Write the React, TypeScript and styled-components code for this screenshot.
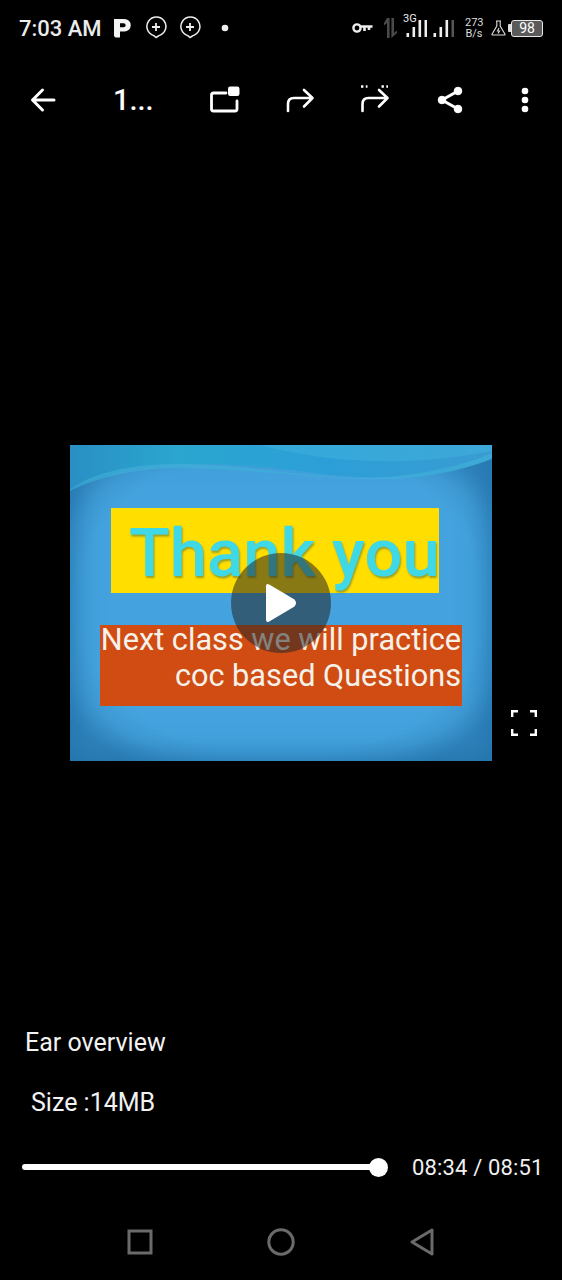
import styled, { createGlobalStyle } from 'styled-components';

const GlobalStyle = createGlobalStyle`
  html, body {
    margin: 0;
    padding: 0;
    background: #000;
  }
  * {
    box-sizing: border-box;
  }
`;

const Page = styled.div`
  width: 562px;
  height: 1280px;
  display: flex;
  flex-direction: column;
  background: #000;
  color: #fff;
  font-family: Roboto, 'Liberation Sans', sans-serif;
  overflow: hidden;
`;

const StatusBar = styled.div`
  height: 56px;
  display: flex;
  align-items: center;
  justify-content: space-between;
  padding: 0 19px;
`;

const StatusGroup = styled.div`
  display: flex;
  align-items: center;
`;

const Clock = styled.span`
  width: 95px;
  font-size: 22px;
  font-weight: 500;
  opacity: 0.92;
`;

const Glyph = styled.svg<{ $left?: number }>`
  display: block;
  flex: none;
  margin-left: ${({ $left }) => $left ?? 0}px;
`;

const Signal = styled.div`
  position: relative;
  width: 51px;
  height: 18px;
  margin-left: 5px;
  display: flex;
  justify-content: space-between;
  padding-left: 3px;
`;

const NetworkLabel = styled.span`
  position: absolute;
  left: 0;
  top: -6px;
  font-size: 11px;
  line-height: 11px;
  color: #eee;
`;

const Speed = styled.div`
  width: 18px;
  margin-left: 11px;
  font-size: 11px;
  line-height: 11px;
  text-align: center;
  color: #ddd;
`;

const Battery = styled.div`
  width: 35px;
  height: 17px;
  margin-left: 2px;
  display: flex;
  align-items: center;

  &::before {
    content: '';
    width: 3px;
    height: 8px;
    background: #ddd;
    border-radius: 1px 0 0 1px;
  }
`;

const BatteryBody = styled.div`
  flex: 1;
  height: 17px;
  border: 1.5px solid #e8e8e8;
  border-radius: 3px;
  background: #5a5a5a;
  font-size: 14px;
  line-height: 14px;
  text-align: center;
`;

const Toolbar = styled.div`
  height: 88px;
  display: flex;
  align-items: center;
  padding-left: 5px;
`;

const IconButton = styled.div`
  width: 75px;
  height: 40px;
  display: flex;
  align-items: center;
  justify-content: center;
`;

const Title = styled.div`
  width: 107px;
  padding-left: 33px;
  font-size: 29px;
  font-weight: 500;
`;

const Stage = styled.div`
  flex: 1;
  display: flex;
  align-items: flex-start;
  padding: 301px 0 0 70px;
`;

const Slide = styled.div`
  position: relative;
  width: 422px;
  height: 316px;
  padding: 63px 0 0 30px;
  background: radial-gradient(ellipse 62% 62% at 50% 50%, #44a3de 78%, #3f9ad4 88%, #2f82bb 100%);
  box-shadow: inset 0 0 30px 2px #2273aa;
`;

const Wave = styled.svg`
  position: absolute;
  top: 0;
  left: 0;
`;

const YellowBanner = styled.div`
  position: relative;
  width: 328px;
  height: 85px;
  margin-left: 11px;
  padding-left: 18px;
  background: #ffde00;
  color: #3fd8e6;
  font-size: 67px;
  font-weight: 500;
  line-height: 90px;
  white-space: nowrap;
  text-shadow: 1px 2px 2px rgba(70, 110, 70, 0.55);
`;

const OrangeBanner = styled.div`
  position: relative;
  width: 362px;
  height: 81px;
  margin-top: 32px;
  padding-right: 1px;
  background: #d04c13;
  font-size: 30.7px;
  line-height: 36px;
  text-align: right;
  white-space: nowrap;
  color: #f6f2ea;
`;

const OrangeText = styled.div`
  position: relative;
  top: -3px;
`;

const PlayOverlay = styled.div`
  position: absolute;
  left: 161px;
  top: 108px;
  width: 100px;
  height: 100px;
  border-radius: 50%;
  background: rgba(38, 38, 38, 0.55);
  display: flex;
  align-items: center;
  justify-content: center;
`;

const ExpandButton = styled.div`
  align-self: flex-start;
  margin: 264px 0 0 18px;
`;

const Details = styled.div`
  height: 190px;
  padding-top: 12px;
`;

const Name = styled.div`
  padding-left: 25px;
  font-size: 25px;
  line-height: 32px;
  color: #f2f2f2;
  margin-top: 1px;
`;

const Size = styled.div`
  margin-top: 28px;
  padding-left: 31px;
  font-size: 25px;
  line-height: 32px;
  color: #f2f2f2;
`;

const Player = styled.div`
  display: flex;
  align-items: center;
  height: 40px;
  margin-top: 28px;
  padding-left: 22px;
`;

const Track = styled.div`
  position: relative;
  width: 356px;
  height: 6px;
  border-radius: 3px;
  background: #fff;
`;

const Thumb = styled.div`
  position: absolute;
  right: -10px;
  top: -6.5px;
  width: 19px;
  height: 19px;
  border-radius: 50%;
  background: #fff;
`;

const Time = styled.div`
  margin-left: 34px;
  font-size: 22px;
  letter-spacing: 0.15px;
  color: #f0f0f0;
  white-space: nowrap;
`;

const NavBar = styled.div`
  height: 76px;
  display: flex;
  align-items: center;
  justify-content: center;
`;

const NavButton = styled.div`
  width: 141px;
  display: flex;
  justify-content: center;
`;

const Bubble = ({ left }: { left: number }) => (
  <Glyph $left={left} width="22" height="24" viewBox="0 0 22 24" fill="none" stroke="#eee" strokeWidth="1.5">
    <path d="M11 21.5 L8.8 19.6 A9.5 9.5 0 1 1 14 19.6 Z" strokeLinejoin="round" />
    <path d="M7 11H15M11 7V15" strokeWidth="1.8" />
  </Glyph>
);

const SignalBars = ({ heights }: { heights: [number, string][] }) => (
  <Glyph width="21" height="18" viewBox="0 0 21 18">
    {heights.map(([h, color], i) => (
      <rect key={i} x={0.5 + i * 6} y={18 - h} width="2.6" height={h} fill={color} />
    ))}
  </Glyph>
);

export default function App() {
  return (
    <Page>
      <GlobalStyle />
      <StatusBar>
        <StatusGroup>
          <Clock>7:03 AM</Clock>
          <Glyph width="17" height="19" viewBox="0 0 17 19">
            <path
              fillRule="evenodd"
              fill="#f4f4f4"
              d="M0 0H10.5A6.2 6.2 0 0 1 10.5 12.5H6V18.5H1.5L0 17ZM6 4.2V8.3H9.6A2.05 2.05 0 0 0 9.6 4.2Z"
            />
          </Glyph>
          <Bubble left={14} />
          <Bubble left={12} />
          <Glyph $left={20} width="8" height="8" viewBox="0 0 8 8">
            <circle cx="4" cy="4" r="3.3" fill="#eee" />
          </Glyph>
        </StatusGroup>
        <StatusGroup>
          <Glyph width="21" height="12" viewBox="0 0 21 12" fill="none" stroke="#eee">
            <circle cx="5" cy="6" r="3.6" strokeWidth="2.4" />
            <path d="M9 4.5H20.5M12.5 4.5V9M17 4.5V8" strokeWidth="2.6" />
          </Glyph>
          <Glyph $left={10} width="15" height="20" viewBox="0 0 15 20" fill="#4a4a4a">
            <path d="M4 0H6.6V20H4V5L1 7.5V5Z" />
            <path d="M8.4 0H11V15L14 12.5V15L8.4 20Z" />
          </Glyph>
          <Signal>
            <NetworkLabel>3G</NetworkLabel>
            <SignalBars heights={[[4, '#eee'], [10, '#eee'], [17, '#eee'], [17, '#eee']]} />
            <SignalBars heights={[[4, '#eee'], [10, '#eee'], [17, '#eee'], [17, '#555']]} />
          </Signal>
          <Speed>
            273
            <br />
            B/s
          </Speed>
          <Glyph $left={8} width="15" height="16" viewBox="0 0 15 16" fill="none" stroke="#ddd" strokeWidth="1.1">
            <path d="M5 1H10M5.8 1V6L1 14.2Q0.8 15 1.6 15H13.4Q14.2 15 14 14.2L9.2 6V1" />
            <path d="M8 8L6.5 11H8.5L7 13.5" />
          </Glyph>
          <Battery>
            <BatteryBody>98</BatteryBody>
          </Battery>
        </StatusGroup>
      </StatusBar>

      <Toolbar>
        <IconButton>
          <svg width="28" height="28" viewBox="0 0 28 28" fill="none" stroke="#fff" strokeWidth="3" strokeLinecap="round" strokeLinejoin="round">
            <path d="M25 14H4M13.5 4L3.5 14L13.5 24" />
          </svg>
        </IconButton>
        <Title>1...</Title>
        <IconButton>
          <svg width="32" height="28" viewBox="0 0 32 28" fill="none" stroke="#fff" strokeWidth="2.8" strokeLinecap="round" strokeLinejoin="round">
            <path d="M17 7H4.5Q2.5 7 2.5 9V23Q2.5 25 4.5 25H26Q28 25 28 23V15" />
            <rect x="19" y="0.5" width="11.5" height="9.5" rx="2.2" fill="#fff" stroke="none" />
          </svg>
        </IconButton>
        <IconButton>
          <svg width="30" height="28" viewBox="0 0 30 28" fill="none" stroke="#fff" strokeWidth="2.6" strokeLinecap="round" strokeLinejoin="round">
            <path d="M3 25V18Q3 12 9 12H27M19 4L27.5 12L19 20.5" />
          </svg>
        </IconButton>
        <IconButton>
          <svg width="30" height="32" viewBox="0 0 30 32" fill="none" stroke="#fff" strokeWidth="2.6" strokeLinecap="round" strokeLinejoin="round">
            <path d="M2.5 27V20Q2.5 14 8.5 14H27M19 6L27.5 14L19 22.5" />
            <path d="M1 2.5H7.5M21.5 2.5H28" strokeDasharray="2.4 2.4" strokeLinecap="butt" strokeWidth="2.4" />
          </svg>
        </IconButton>
        <IconButton>
          <svg width="28" height="30" viewBox="0 0 28 30" fill="#fff" stroke="#fff">
            <path d="M22 6L6 15L22 24" fill="none" strokeWidth="3" />
            <circle cx="22" cy="6" r="3.8" />
            <circle cx="6" cy="15" r="3.8" />
            <circle cx="22" cy="24" r="3.8" />
          </svg>
        </IconButton>
        <IconButton>
          <svg width="10" height="30" viewBox="0 0 10 30" fill="#fff">
            <circle cx="5" cy="6" r="3.3" />
            <circle cx="5" cy="15" r="3.3" />
            <circle cx="5" cy="24" r="3.3" />
          </svg>
        </IconButton>
      </Toolbar>

      <Stage>
        <Slide>
          <Wave width="422" height="60" viewBox="0 0 422 60">
            <defs>
              <linearGradient id="topBand" x1="0" y1="0" x2="1" y2="0">
                <stop offset="0" stopColor="#2a8fc4" />
                <stop offset="0.25" stopColor="#2aa6cf" />
                <stop offset="0.6" stopColor="#2c9fd8" />
                <stop offset="1" stopColor="#3a9bd2" />
              </linearGradient>
            </defs>
            <path d="M0 0H422V14C380 30 320 36 260 30C200 22 130 14 70 22C40 27 15 36 0 44Z" fill="url(#topBand)" />
            <path d="M0 44C30 24 70 18 120 19C190 21 240 34 300 33C350 31 395 20 422 8V13C390 28 340 36 290 34C220 31 170 23 110 23C70 23 30 31 0 46Z" fill="#3fb4d8" opacity="0.55" />
            <path d="M190 0C250 16 330 24 422 6V0Z" fill="#3fb0dc" opacity="0.55" />
          </Wave>
          <YellowBanner>Thank you</YellowBanner>
          <OrangeBanner>
            <OrangeText>
              Next class we will practice
              <br />
              coc based Questions
            </OrangeText>
          </OrangeBanner>
          <PlayOverlay>
            <svg width="36" height="40" viewBox="0 0 36 40" fill="#fff">
              <path d="M3 3.5Q3 0 6.2 1.6L31.5 16.5Q34.5 20 31.5 23.5L6.2 38.4Q3 40 3 36.5Z" />
            </svg>
          </PlayOverlay>
        </Slide>
        <ExpandButton>
          <svg width="28" height="28" viewBox="0 0 28 28" fill="none" stroke="#fff" strokeWidth="2.4">
            <path d="M2.2 8V2.2H8M20 2.2H25.8V8M25.8 20V25.8H20M8 25.8H2.2V20" />
          </svg>
        </ExpandButton>
      </Stage>

      <Details>
        <Name>Ear overview</Name>
        <Size>Size :14MB</Size>
        <Player>
          <Track>
            <Thumb />
          </Track>
          <Time>08:34 / 08:51</Time>
        </Player>
      </Details>

      <NavBar>
        <NavButton>
          <svg width="26" height="26" viewBox="0 0 26 26" fill="none" stroke="#6a6a6a" strokeWidth="3">
            <rect x="2" y="2" width="22" height="22" />
          </svg>
        </NavButton>
        <NavButton>
          <svg width="28" height="28" viewBox="0 0 28 28" fill="none" stroke="#6a6a6a" strokeWidth="3">
            <circle cx="14" cy="14" r="12.2" />
          </svg>
        </NavButton>
        <NavButton>
          <svg width="26" height="28" viewBox="0 0 26 28" fill="none" stroke="#6a6a6a" strokeWidth="3" strokeLinejoin="round">
            <path d="M23 2V26L3 14Z" />
          </svg>
        </NavButton>
      </NavBar>
    </Page>
  );
}
